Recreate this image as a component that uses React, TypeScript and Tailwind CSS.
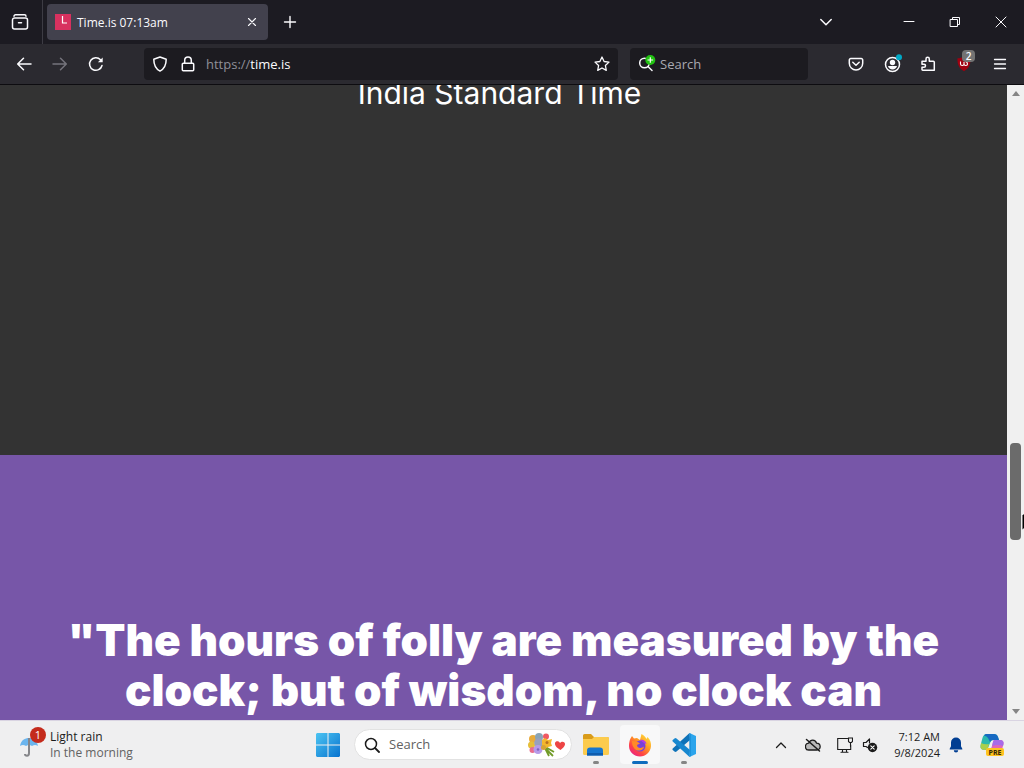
import React from "react";

type IconProps = { children: React.ReactNode; className?: string; box?: string };

function Icon({ children, className = "size-4", box = "0 0 16 16" }: IconProps) {
  return (
    <svg
      viewBox={box}
      className={"shrink-0 " + className}
      fill="none"
      stroke="currentColor"
      strokeWidth={1.5}
      strokeLinecap="round"
      strokeLinejoin="round"
      aria-hidden="true"
    >
      {children}
    </svg>
  );
}

function TabStrip() {
  return (
    <div className="flex h-11 shrink-0 items-center bg-[#1c1b22]">
      <button aria-label="View recent browsing" className="flex h-11 w-[43px] shrink-0 items-center justify-center border-r border-[#3d3c44] pr-[2px]">
        <Icon className="size-[18px]" box="0 0 18 18">
          <path d="M4.500 1.800h9a1.500 1.500 0 0 1 1.500 1.500M3 3.300a1.500 1.500 0 0 1 1.500-1.500M3.500 5h11a2 2 0 0 1 2 2v7a2 2 0 0 1-2 2h-11a2 2 0 0 1-2-2V7a2 2 0 0 1 2-2zM7.500 9.700h3" />
        </Icon>
      </button>
      <div className="ml-1 flex h-9 w-[221px] items-center rounded bg-[#42414d] pr-2 pl-2">
        <svg viewBox="0 0 16 16" className="size-4 shrink-0" aria-hidden="true">
          <rect width="16" height="16" fill="#d8315f" />
          <path d="M7.500 2v7H12" fill="none" stroke="#fff" strokeWidth="1.200" />
        </svg>
        <span className="ml-[6px] flex-1 pt-px text-xs">Time.is 07:13am</span>
        <button aria-label="Close tab" className="flex size-4 items-center justify-center">
          <Icon className="size-[10px]" box="0 0 10 10">
            <path d="M1.500 1.500l7 7M8.500 1.500l-7 7" strokeWidth={1.1} />
          </Icon>
        </button>
      </div>
      <button aria-label="New tab" className="ml-3 flex size-5 items-center justify-center">
        <Icon className="size-[14px]" box="0 0 14 14">
          <path d="M7 1.500v11M1.500 7h11" strokeWidth={1.4} />
        </Icon>
      </button>
      <div className="ml-auto flex items-center">
        <button aria-label="List all tabs" className="mr-11 flex h-11 w-8 items-center justify-center">
          <Icon className="size-[14px]" box="0 0 14 14">
            <path d="M1.800 4.500L7 9.700l5.200-5.200" />
          </Icon>
        </button>
        <button aria-label="Minimize" className="flex h-11 w-[46px] items-center justify-center">
          <Icon className="size-[12px]" box="0 0 12 12">
            <path d="M1 5.500h10" strokeWidth={1} />
          </Icon>
        </button>
        <button aria-label="Restore" className="flex h-11 w-[46px] items-center justify-center">
          <Icon className="size-[12px]" box="0 0 12 12">
            <path d="M1.500 3.500h7v7h-7zM3.500 3.500v-2h7v7h-2" strokeWidth={1} strokeLinejoin="miter" />
          </Icon>
        </button>
        <button aria-label="Close window" className="flex h-11 w-[46px] items-center justify-center">
          <Icon className="size-[12px]" box="0 0 12 12">
            <path d="M1 1l10 10M11 1L1 11" strokeWidth={1} />
          </Icon>
        </button>
      </div>
    </div>
  );
}

function NavBar() {
  return (
    <div className="flex h-[41px] shrink-0 items-center border-b border-[#0d0c10] bg-[#2b2a30] px-3">
      <button aria-label="Back" className="flex w-6 justify-center">
        <Icon>
          <path d="M15 8H2M7.500 2.200L1.700 8l5.800 5.800" />
        </Icon>
      </button>
      <button aria-label="Forward" className="ml-3 flex w-6 justify-center text-[#75747c]" disabled>
        <Icon>
          <path d="M1 8h13M8.500 2.200L14.300 8l-5.800 5.800" />
        </Icon>
      </button>
      <button aria-label="Reload" className="ml-3 flex w-6 justify-center">
        <Icon>
          <path d="M14 9.500A6.300 6.300 0 1 1 12.500 3.700" />
          <path d="M14.700 1.500v4.800H9.900z" fill="currentColor" stroke="none" />
        </Icon>
      </button>
      <div className="ml-9 flex h-8 min-w-0 flex-1 items-center rounded-sm bg-[#1c1b20] px-2">
        <Icon>
          <path d="M8 1l6.200 2.300c0 5.700-1.900 9.700-6.200 11.800C3.700 13 1.800 9 1.800 3.300z" />
        </Icon>
        <Icon className="ml-3 size-4">
          <path d="M3.300 7.200h9.400a1 1 0 0 1 1 1v5.600a1 1 0 0 1-1 1H3.300a1 1 0 0 1-1-1V8.200a1 1 0 0 1 1-1zM4.700 7V4.300a3.300 3.300 0 0 1 6.600 0V7" />
        </Icon>
        <a href="https://time.is" className="ml-[10px] flex-1 pt-[2px] text-[13px]">
          <span className="text-[#8f8f98]">https://</span>time.is
        </a>
        <button aria-label="Bookmark this page">
          <Icon>
            <path d="M8 1l2.100 4.500 4.900.6-3.600 3.400.9 4.900L8 12l-4.300 2.400.9-4.900L1 6.100l4.900-.6z" strokeWidth={1.3} />
          </Icon>
        </button>
      </div>
      <div className="ml-3 flex h-8 w-[178px] items-center rounded-sm bg-[#1c1b20] pl-2">
        <svg viewBox="0 0 18 18" className="size-[18px] shrink-0" fill="none" aria-hidden="true">
          <circle cx="6.500" cy="8" r="4.800" stroke="#fbfbfe" strokeWidth="1.500" />
          <path d="M10 11.500l4 4" stroke="#fbfbfe" strokeWidth="1.500" strokeLinecap="round" />
          <circle cx="12.300" cy="5" r="5" fill="#22c312" />
          <path d="M12.300 2.200v5.600M9.500 5h5.600" stroke="#fff" strokeWidth="1.200" />
        </svg>
        <input
          aria-label="Search the web"
          placeholder="Search"
          className="ml-1 w-full min-w-0 bg-transparent pt-[2px] text-[13px] outline-none placeholder:text-[#a9a9b0]"
        />
      </div>
      <div className="ml-9 flex items-center gap-3">
        <button aria-label="Save to Pocket" className="flex w-6 justify-center">
          <Icon>
            <path d="M2.800 2.500h10.400a1.500 1.500 0 0 1 1.500 1.500v3.200a6.700 6.700 0 0 1-13.400 0V4a1.500 1.500 0 0 1 1.500-1.500zM4.800 6.300L8 9.300l3.200-3" />
          </Icon>
        </button>
        <button aria-label="Account" className="flex w-6 justify-center">
          <svg viewBox="0 0 20 20" className="size-5" fill="none" aria-hidden="true">
            <circle cx="10.500" cy="10.500" r="7" stroke="#fbfbfe" strokeWidth="1.500" />
            <circle cx="10.500" cy="8.500" r="2.700" fill="#fbfbfe" />
            <path d="M6 12h9c-.5 2.200-2.300 3.500-4.500 3.500S6.500 14.200 6 12z" fill="#fbfbfe" />
            <circle cx="17" cy="3.300" r="3" fill="#00a9c6" />
          </svg>
        </button>
        <button aria-label="Extensions" className="flex w-6 justify-center">
          <Icon>
            <path d="M2 5.200h4V3a1.600 1.600 0 0 1 3.300 0v2.200h4a1 1 0 0 1 1 1v8H2.700a.7.7 0 0 1-.7-.7v-2.300h2a1.500 1.500 0 0 0 0-3H2z" />
          </Icon>
        </button>
        <button aria-label="uBlock Origin, 2 blocked" className="relative flex w-6 justify-center">
          <svg viewBox="0 0 16 16" className="size-4" aria-hidden="true">
            <path d="M8 .5c2 1.200 4 1.700 6.500 1.800.3 6-1.500 10-6.500 12.900C3 12.300 1.200 8.300 1.500 2.300 4 2.200 6 1.700 8 .5z" fill="#a00010" />
            <path d="M4.500 5.500v2.500c0 2 3.500 2 3.500 0v-2M8 8c0 2 3.500 2 3.500 0 0-2-2-2.500-2-2.500" fill="none" stroke="#fff" strokeWidth="1.100" />
          </svg>
          <span className="absolute -top-[6px] left-[10px] h-3 w-[13px] rounded-sm bg-[#737373] text-center text-[10px] leading-3 font-semibold">2</span>
        </button>
        <button aria-label="Open application menu" className="flex w-6 justify-center">
          <Icon>
            <path d="M2.500 3.500h11M2.500 8h11M2.500 12.500h11" strokeWidth={1.3} />
          </Icon>
        </button>
      </div>
    </div>
  );
}

function ScrollBar() {
  return (
    <div className="relative flex w-[17px] shrink-0 flex-col items-center justify-between bg-[#f0f0f0] py-[6px]">
      <svg viewBox="0 0 8 5" className="h-[5px] w-2" aria-hidden="true">
        <path d="M4 0l4 5H0z" fill="#858585" />
      </svg>
      <span className="absolute top-[56.300%] h-[97px] w-[11px] rounded-sm bg-[#6b6b6b]" />
      <svg viewBox="0 0 8 5" className="h-[5px] w-2" aria-hidden="true">
        <path d="M4 5L0 0h8z" fill="#858585" />
      </svg>
      <svg viewBox="0 0 2 17" className="absolute top-[67.500%] right-0 h-[17px] w-[2px]" aria-hidden="true">
        <path d="M2 0L.5 1.500v14L2 14z" fill="#000" />
      </svg>
    </div>
  );
}

function TimePage() {
  return (
    <div className="flex min-h-0 flex-1 bg-[#333]">
      <main className="flex min-w-0 flex-1 flex-col overflow-hidden font-[Inter,sans-serif] text-white">
        <section className="flex h-[370px] shrink-0 flex-col overflow-hidden bg-[#333]">
          <h2 className="-mt-2 pr-4 pl-2 text-center text-[30px] leading-8">India Standard Time</h2>
        </section>
        <section className="min-h-0 flex-1 overflow-hidden bg-[#7756a8] px-12 pt-40">
          <blockquote className="text-center text-[44px] leading-[50px] font-black">
            "The hours of folly are measured by the clock; but of wisdom, no clock can
          </blockquote>
        </section>
      </main>
      <ScrollBar />
    </div>
  );
}

function StartLogo() {
  return (
    <svg viewBox="0 0 24 24" className="size-6" aria-hidden="true">
      <defs>
        <linearGradient id="start" x1="0" y1="0" x2="1" y2="1">
          <stop offset="0" stopColor="#4cc4f2" />
          <stop offset="1" stopColor="#0873cf" />
        </linearGradient>
      </defs>
      <path d="M1 0h10.500v11.500H0V1zM12.500 0H23l1 1v10.500H12.500zM0 12.500h11.500V24H1l-1-1zM12.500 12.500H24V23l-1 1H12.500z" fill="url(#start)" />
    </svg>
  );
}

function Bouquet() {
  return (
    <svg viewBox="0 0 40 26" className="h-[26px] w-10 shrink-0" aria-hidden="true">
      <path d="M14 12l12 12M16 12l6 12M15 13l12 7" stroke="#719b28" strokeWidth="1.800" />
      <circle cx="6" cy="7" r="4" fill="#e8ab3c" />
      <circle cx="12" cy="5" r="4" fill="#8aa4b5" />
      <circle cx="19" cy="4.500" r="3" fill="#ef5963" />
      <circle cx="4.500" cy="13" r="3.500" fill="#e6be38" />
      <circle cx="5.500" cy="18" r="3" fill="#e96d8d" />
      <circle cx="12" cy="11" r="4.800" fill="#98a0bd" />
      <circle cx="11" cy="17.500" r="4.500" fill="#b69be8" />
      <circle cx="11" cy="17.500" r="1.300" fill="#7d62c4" />
      <path d="M15 8l3-2 3 2 4-1-1 4 1 3-4 1-3 2-3-4z" fill="#f3b72c" />
      <circle cx="16.500" cy="15.500" r="2.500" fill="#d5a435" />
      <circle cx="20" cy="10.500" r="1.500" fill="#b77022" />
      <path d="M33.500 18c-3-2-6-4-5.500-7 .5-2.500 4-2.500 5 0 2-2.500 5.500-1 5 1.500-.3 2-2.500 4-4.500 5.500z" fill="#ed4545" />
    </svg>
  );
}

function FolderLogo() {
  return (
    <svg viewBox="0 0 26 24" className="h-6 w-[26px]" aria-hidden="true">
      <path d="M0 2.500Q0 1 1.500 1H8l3 3h13.500Q26 4 26 5.500V11H0z" fill="#d99b19" />
      <path d="M0 6h9l2-2h13.500Q26 4 26 5.500v15q0 1.500-1.500 1.500h-23Q0 22 0 20.500z" fill="#fccb4d" />
      <path d="M4 22.500v-5q0-3 3-3h10q3 0 3 3v5z" fill="#1676cf" />
      <path d="M4 20h16v2.500H4z" fill="#0f5cad" />
    </svg>
  );
}

function FirefoxLogo() {
  return (
    <svg viewBox="0 0 24 24" className="size-6" aria-hidden="true">
      <defs>
        <linearGradient id="fox" x1="1" y1="0" x2="0.200" y2="1">
          <stop offset="0" stopColor="#fff044" />
          <stop offset="0.450" stopColor="#ff9a22" />
          <stop offset="0.750" stopColor="#ff4245" />
          <stop offset="1" stopColor="#e5208c" />
        </linearGradient>
      </defs>
      <path d="M2.500 5.500L4 3l2 2.500L9 5l3 2 1.500-6c3 1.500 4 3.200 5 5l1-2c3 3 3.700 6 3.500 9-.4 6-5.200 10.500-11 10.500S1 19 1 13c0-3 .5-5.500 1.500-7.500z" fill="url(#fox)" />
      <circle cx="12" cy="13" r="5.500" fill="#7940da" />
      <path d="M4 8l5 .5 3 2-3 1.500c0 3 4 4 7 1.500 0 4-7 6-10 1.500-1.500-2-2-4-2-7z" fill="#ff8b27" />
      <path d="M12 7c3-1 6 1 6.500 4L16 10z" fill="#b53ae2" />
    </svg>
  );
}

function CodeLogo() {
  return (
    <svg viewBox="0 0 24 24" className="size-6" aria-hidden="true">
      <path d="M17.500 0L24 3v18l-6.500 3z" fill="#2ba4ec" />
      <path d="M17.500 0L1 15.300q-1.200 1 0 2l1.500 1.300q1 .8 2 0L18 7z" fill="#0e72b8" />
      <path d="M17.500 24L1 8.700q-1.200-1 0-2l1.500-1.300q1-.8 2 0L18 17z" fill="#1787cf" />
      <path d="M17.500 0L19 1v22l-1.500 1z" fill="#1c93dd" />
    </svg>
  );
}

function AppButton({ label, active, children }: { label: string; active?: boolean; children: React.ReactNode }) {
  return (
    <button
      aria-label={label}
      className={
        active
          ? "flex h-[39px] w-10 flex-col items-center justify-between rounded bg-[#f8f8f9] pt-2"
          : "flex h-[39px] w-10 flex-col items-center justify-between rounded pt-2"
      }
    >
      {children}
      <span className={active ? "h-[3px] w-4 rounded-full bg-[#0f6cbd]" : "h-[3px] w-[6px] rounded-full bg-[#858585]"} />
    </button>
  );
}

function TaskBar() {
  return (
    <footer className="grid h-12 shrink-0 grid-cols-[1fr_auto_1fr] items-center border-t border-[#d9d4e2] bg-[#efeff0] font-['Open_Sans',sans-serif] text-[#1b1b1b]">
      <button className="flex items-center justify-self-start pl-5 text-left">
        <svg viewBox="0 0 26 30" className="mb-[6px] h-[30px] w-[26px]" aria-hidden="true">
          <path d="M0 19c1-6 5-8 9-8s8 2 9 8c-2-1.500-4-1.500-6 0-2-1.500-4-1.500-6 0-2-1.500-4-1.500-6 0z" fill="#6bb5ee" />
          <path d="M9 11v15c0 4-4 3-4 1" fill="none" stroke="#85868a" strokeWidth="2" />
          <circle cx="18" cy="8" r="8" fill="#c42b1c" />
          <text x="18" y="12" textAnchor="middle" fontSize="11" fill="#fff" fontFamily="Open Sans">1</text>
        </svg>
        <span className="ml-1 flex flex-col text-xs leading-4">
          <span>Light rain</span>
          <span className="text-[#626262]">In the morning</span>
        </span>
      </button>
      <div className="flex items-center pr-3">
        <button aria-label="Start" className="flex size-10 items-center justify-center">
          <StartLogo />
        </button>
        <label className="ml-[6px] flex h-[31px] w-[218px] items-center rounded-full border border-[#e2e2e2] bg-white pr-1 pl-[9px]">
          <Icon>
            <circle cx="7" cy="7" r="5.500" />
            <path d="M11 11l4 4" strokeWidth={1.8} />
          </Icon>
          <input
            aria-label="Search Windows"
            placeholder="Search"
            className="ml-[9px] min-w-0 flex-1 bg-transparent text-[13px] outline-none placeholder:text-[#616161]"
          />
          <Bouquet />
        </label>
        <div className="ml-1 flex gap-1">
          <AppButton label="File Explorer"><FolderLogo /></AppButton>
          <AppButton label="Firefox" active><FirefoxLogo /></AppButton>
          <AppButton label="Visual Studio Code"><CodeLogo /></AppButton>
        </div>
      </div>
      <div className="flex items-center justify-self-end pr-5">
        <button aria-label="Show hidden icons">
          <Icon className="size-3" box="0 0 12 12">
            <path d="M1.500 8.500L6 4l4.500 4.500" strokeWidth={1.3} />
          </Icon>
        </button>
        <button aria-label="OneDrive" className="ml-[18px]">
          <Icon className="size-4">
            <path d="M4 13a3.400 3.400 0 0 1-.3-6.800C5 2 10.500 2 11.500 6.200c4.800 0 4.800 6.800.3 6.800z" fill="#b9b9b9" strokeWidth={1.3} />
            <path d="M1.500 2.500l13 11.500" />
          </Icon>
        </button>
        <button aria-label="Network" className="ml-4">
          <Icon className="size-4">
            <path d="M10.500 1.500H.7v11h13V8M4 15.300h7M5.500 12.500v2.500M9.500 12.500v2.500M11.500 1h4v3.500l-1 1h-2l-1-1zM13.500 5.500v4" strokeWidth={1.1} strokeLinejoin="miter" />
          </Icon>
        </button>
        <button aria-label="Volume muted" className="ml-[9px]">
          <Icon className="size-4">
            <path d="M5.500 10.500L4 9.500H1.500v-4H4L7.500 2v4" strokeWidth={1.2} />
            <circle cx="10.500" cy="10.500" r="4.700" fill="#1b1b1b" stroke="none" />
            <path d="M8.800 8.800l3.400 3.400M12.200 8.800l-3.400 3.400" stroke="#fff" strokeWidth={1.1} />
          </Icon>
        </button>
        <button className="ml-4 flex flex-col text-right text-[11px] leading-4">
          <span>7:12 AM</span>
          <span>9/8/2024</span>
        </button>
        <button aria-label="Notifications" className="ml-2">
          <svg viewBox="0 0 16 16" className="size-4" fill="#003e92" aria-hidden="true">
            <path d="M8 .5a5 5 0 0 1 5 5v3.800l1.300 2.500v.7H1.700v-.7L3 9.300V5.500a5 5 0 0 1 5-5zM5.800 13.300h4.400a2.200 2.200 0 0 1-4.400 0z" />
          </svg>
        </button>
        <button aria-label="Copilot preview" className="ml-4">
          <svg viewBox="0 0 24 24" className="size-6" aria-hidden="true">
            <path d="M6 1h8q3 0 4 3l1 3h-6q-2 0-3 3l-2 5q-1 2-3 2-5 0-4.500-4Q2 6 3 3.500 4 1 6 1z" fill="#2bb8ae" />
            <path d="M6 1h8q3 0 4 3l1 3h-6q-2 0-3 2L8 5Q7 3 4 2.500 5 1 6 1z" fill="#1769c2" />
            <path d="M1 10q4 2 8 1l-1 4q-1 2-3 2-5 0-4.500-4z" fill="#a9cf4c" />
            <path d="M14 7h6q4 0 3.500 4-1 5-2.500 7H9q2-1 3-5l1-4q.5-2 1-2z" fill="#e067b8" />
            <path d="M14 7h6q4 0 3.500 4l-.5 2q-5-2-11 0l1-4q.5-2 1-2z" fill="#a76be8" />
            <rect x="6" y="15" width="18" height="8" rx="2" fill="#ffc31f" />
            <text x="15" y="21.700" textAnchor="middle" fontSize="7" fontWeight="700" fill="#33270a" fontFamily="Open Sans">PRE</text>
          </svg>
        </button>
      </div>
    </footer>
  );
}

export default function App() {
  return (
    <div className="flex h-screen flex-col overflow-hidden font-['Open_Sans',sans-serif] text-[#fbfbfe]">
      <TabStrip />
      <NavBar />
      <TimePage />
      <TaskBar />
    </div>
  );
}
